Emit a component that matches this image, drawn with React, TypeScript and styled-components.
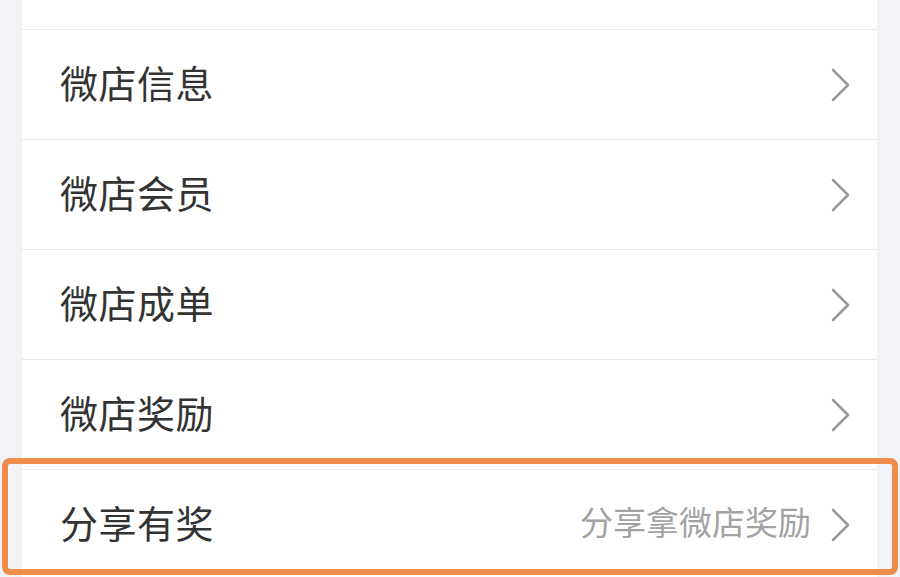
import React from "react";
import styled, { createGlobalStyle } from "styled-components";

const Global = createGlobalStyle`
  html, body { margin: 0; padding: 0; background: #f2f3f7; }
  body { font-family: "Noto Sans CJK SC", "Noto Sans", sans-serif; }
`;

const Page = styled.div`
  position: relative;
  width: 900px;
  height: 577px;
  overflow: hidden;
  background: #f2f3f7;
  padding: 0 23px 0 22px;
  box-sizing: border-box;
`;

const Card = styled.div`
  background: #ffffff;
  display: flex;
  flex-direction: column;
`;

const Row = styled.div<{ $h?: number }>`
  height: ${(p) => p.$h ?? 109}px;
  display: flex;
  align-items: center;
  padding: 0 27px 0 38px;
  border-bottom: 1px solid #e9e9ec;
  flex-shrink: 0;
`;

const Label = styled.span`
  flex: 1;
  font-size: 38px;
  color: #333333;
  letter-spacing: 0.5px;
  line-height: 1;
  margin-bottom: 6px;
`;

const Hint = styled.span`
  font-size: 33px;
  color: #a3a3a3;
  margin-right: 20px;
  line-height: 1;
  margin-bottom: 6px;
`;

const Highlight = styled.div`
  position: absolute;
  left: 2px;
  top: 458px;
  width: 896px;
  height: 117px;
  box-sizing: border-box;
  border: 6px solid #ef8c4a;
  border-radius: 8px;
  pointer-events: none;
`;

const Chevron = () => (
  <svg width="19" height="34" viewBox="0 0 19 34" fill="none">
    <polyline
      points="2,2 17,17 2,32"
      stroke="#9a9a9a"
      strokeWidth="2.6"
      strokeLinecap="round"
      strokeLinejoin="round"
    />
  </svg>
);

const items = ["微店信息", "微店会员", "微店成单", "微店奖励"];

export default function App() {
  return (
    <>
      <Global />
      <Page>
        <Card>
          <Row $h={29} />
          {items.map((t) => (
            <Row key={t}>
              <Label>{t}</Label>
              <Chevron />
            </Row>
          ))}
          <Row>
            <Label>分享有奖</Label>
            <Hint>分享拿微店奖励</Hint>
            <Chevron />
          </Row>
        </Card>
        <Highlight />
      </Page>
    </>
  );
}
